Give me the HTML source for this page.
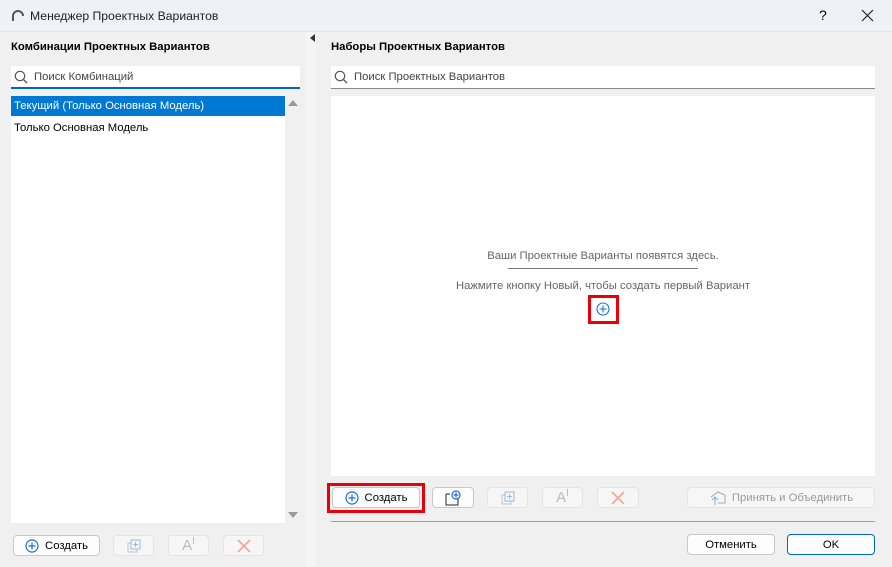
<!DOCTYPE html><html><head><meta charset="utf-8"><style>
*{margin:0;padding:0;box-sizing:border-box}
body{width:892px;height:567px;overflow:hidden;background:#f0f0f0;font-family:"Liberation Sans",sans-serif;font-size:11.3px;color:#000;position:relative}
.a{position:absolute}
.btn{position:absolute;height:21px;border:1px solid #c8c8c8;border-radius:4px;background:#fdfdfd;display:flex;align-items:center;justify-content:center;font-size:11.3px}
.dis{background:#f6f6f6;border-color:#e4e4e4;color:#a8a8a8}
.t{white-space:nowrap}
</style></head><body>
<div class="a" style="left:0;top:0;width:892px;height:32px;background:#eef2f6;border-bottom:1px solid #e6e6e6"></div>
<svg class="a" style="left:11px;top:9px" width="14" height="14"><path d="M2 12 V7 A5 5 0 0 1 12 7" fill="none" stroke="#555" stroke-width="2"/></svg>
<div class="a t" style="left:30px;top:9px;font-size:12.2px;color:#222">Менеджер Проектных Вариантов</div>
<div class="a t" style="left:819px;top:7px;font-size:14px">?</div>
<svg class="a" style="left:861px;top:9px" width="13" height="13"><path d="M1 1L12 12M12 1L1 12" stroke="#222" stroke-width="1.2"/></svg>
<div class="a" style="left:305px;top:33px;width:11px;height:534px;background:#f5f5f5"></div>
<svg class="a" style="left:310px;top:34px" width="6" height="9"><path d="M5 0V8L0 4Z" fill="#333"/></svg>

<div class="a t" style="left:11px;top:41px;font-weight:bold;font-size:11.3px">Комбинации Проектных Вариантов</div>
<div class="a" style="left:11px;top:66px;width:289px;height:23px;background:#fff;border-bottom:2px solid #0067c0"></div>
<svg class="a" style="left:14px;top:70px" width="14" height="14"><circle cx="6" cy="6" r="4.7" fill="none" stroke="#555" stroke-width="1.2"/><path d="M9.5 9.5L13 13" stroke="#555" stroke-width="1.3"/></svg>
<div class="a t" style="left:34px;top:71px;color:#444">Поиск Комбинаций</div>
<div class="a" style="left:11px;top:96px;width:289px;height:427px;background:#fff"></div>
<div class="a" style="left:285px;top:96px;width:15px;height:427px;background:#f0f0f0"></div>
<svg class="a" style="left:288px;top:100px" width="10" height="7"><path d="M0 6L5 0L10 6Z" fill="#9a9a9a"/></svg>
<svg class="a" style="left:288px;top:512px" width="10" height="7"><path d="M0 0L5 6L10 0Z" fill="#9a9a9a"/></svg>
<div class="a" style="left:11px;top:96px;width:274px;height:20px;background:#0078d4"></div>
<div class="a t" style="left:14px;top:100px;color:#fff">Текущий (Только Основная Модель)</div>
<div class="a t" style="left:14px;top:122px">Только Основная Модель</div>

<div class="btn" style="left:13px;top:535px;width:87px"><svg width="14" height="14" style="margin-right:6px"><circle cx="7" cy="7" r="6" fill="none" stroke="#1a6fd8" stroke-width="1.2"/><path d="M7 3.5V10.5M3.5 7H10.5" stroke="#1a6fd8" stroke-width="1.2"/></svg>Создать</div>
<div class="btn dis" style="left:113px;top:535px;width:41px"><svg width="16" height="16"><rect x="2" y="5" width="9" height="9" fill="#f6f6f6" stroke="#b8c4d4"/><rect x="5" y="2" width="9" height="9" fill="#f6f6f6" stroke="#9bb8e0"/><path d="M9.5 4V9M7 6.5H12" stroke="#9bb8e0"/></svg></div>
<div class="btn dis" style="left:168px;top:535px;width:41px;font-size:15px;color:#bbb">A<span style="font-size:10px;margin-top:-8px">I</span></div>
<div class="btn dis" style="left:223px;top:535px;width:41px"><svg width="14" height="14"><path d="M1 1L13 13M13 1L1 13" stroke="#f4a89a" stroke-width="1.8"/></svg></div>

<div class="a t" style="left:331px;top:41px;font-weight:bold">Наборы Проектных Вариантов</div>
<div class="a" style="left:331px;top:66px;width:544px;height:23px;background:#fff;border-bottom:1px solid #8a8a8a"></div>
<svg class="a" style="left:334px;top:70px" width="14" height="14"><circle cx="6" cy="6" r="4.7" fill="none" stroke="#555" stroke-width="1.2"/><path d="M9.5 9.5L13 13" stroke="#555" stroke-width="1.3"/></svg>
<div class="a t" style="left:354px;top:71px;color:#444">Поиск Проектных Вариантов</div>
<div class="a" style="left:331px;top:96px;width:544px;height:380px;background:#fff"></div>
<div class="a t" style="left:403px;width:400px;text-align:center;top:250px;color:#666">Ваши Проектные Варианты появятся здесь.</div>
<div class="a" style="left:508px;top:268px;width:190px;height:1px;background:#777"></div>
<div class="a t" style="left:403px;width:400px;text-align:center;top:280px;color:#666">Нажмите кнопку Новый, чтобы создать первый Вариант</div>
<div class="a" style="left:588px;top:295px;width:31px;height:29px;border:3px solid #e8000b"></div>
<svg class="a" style="left:596px;top:302px" width="14" height="14"><circle cx="7" cy="7" r="6" fill="none" stroke="#1a6fd8" stroke-width="1.1"/><path d="M7 3.5V10.5M3.5 7H10.5" stroke="#1a6fd8" stroke-width="1.1"/></svg>

<div class="a" style="left:327px;top:483px;width:98px;height:30px;border:3px solid #e8000b"></div>
<div class="btn" style="left:332px;top:487px;width:88px"><svg width="14" height="14" style="margin-right:6px"><circle cx="7" cy="7" r="6" fill="none" stroke="#1a6fd8" stroke-width="1.2"/><path d="M7 3.5V10.5M3.5 7H10.5" stroke="#1a6fd8" stroke-width="1.2"/></svg>Создать</div>
<div class="btn" style="left:432px;top:487px;width:42px"><svg width="18" height="16"><path d="M2 4V15H14V8M2 4H6" fill="none" stroke="#222"/><circle cx="12" cy="5" r="4" fill="#fff" stroke="#1a6fd8" stroke-width="1.2"/><path d="M12 2.5V7.5M9.5 5H14.5" stroke="#1a6fd8" stroke-width="1.2"/></svg></div>
<div class="btn dis" style="left:487px;top:487px;width:41px"><svg width="16" height="16"><rect x="2" y="5" width="9" height="9" fill="#f6f6f6" stroke="#b8c4d4"/><rect x="5" y="2" width="9" height="9" fill="#f6f6f6" stroke="#9bb8e0"/><path d="M9.5 4V9M7 6.5H12" stroke="#9bb8e0"/></svg></div>
<div class="btn dis" style="left:542px;top:487px;width:41px;font-size:15px;color:#bbb">A<span style="font-size:10px;margin-top:-8px">I</span></div>
<div class="btn dis" style="left:597px;top:487px;width:42px"><svg width="14" height="14"><path d="M1 1L13 13M13 1L1 13" stroke="#f4a89a" stroke-width="1.8"/></svg></div>
<div class="btn dis" style="left:687px;top:487px;width:188px;color:#9a9a9a"><svg width="20" height="16" style="margin-right:3px"><path d="M2 7L9 2L16 5V13H9" fill="none" stroke="#aaa"/><path d="M6 15V7M3 10L6 7L9 10" fill="none" stroke="#8fb8e8" stroke-width="1.2"/></svg>Принять и Объединить</div>
<div class="a" style="left:331px;top:521px;width:544px;height:1px;background:#a0a0a0"></div>
<div class="btn" style="left:687px;top:534px;width:88px">Отменить</div>
<div class="btn" style="left:787px;top:534px;width:88px;border-color:#0067c0">OK</div>
</body></html>
